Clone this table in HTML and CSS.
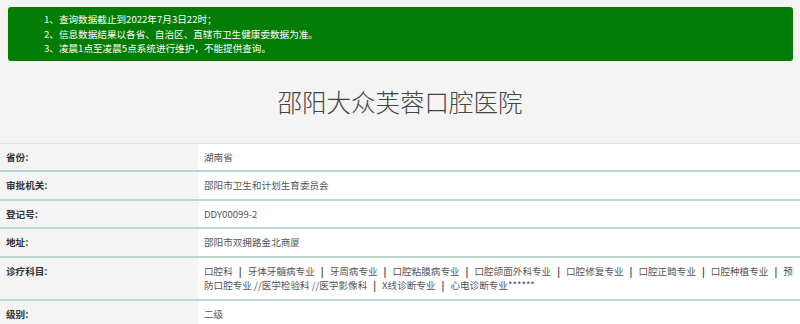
FILE: index.html
```html
<!DOCTYPE html>
<html lang="zh">
<head>
<meta charset="utf-8">
<title>邵阳大众芙蓉口腔医院</title>
<link rel="stylesheet" href="styles.css">
</head>
<body>
<div class="notice">
  <ul class="notice-list">
    <li>1、查询数据截止到2022年7月3日22时；</li>
    <li>2、信息数据结果以各省、自治区、直辖市卫生健康委数据为准。</li>
    <li>3、凌晨1点至凌晨5点系统进行维护，不能提供查询。</li>
  </ul>
</div>
<h1 class="title">邵阳大众芙蓉口腔医院</h1>
<div class="info">
  <div class="row"><div class="label">省份:</div><div class="value">湖南省</div></div>
  <div class="row"><div class="label">审批机关:</div><div class="value">邵阳市卫生和计划生育委员会</div></div>
  <div class="row"><div class="label">登记号:</div><div class="value">DDY00099-2</div></div>
  <div class="row"><div class="label">地址:</div><div class="value">邵阳市双拥路金北商厦</div></div>
  <div class="row"><div class="label">诊疗科目:</div><div class="value">口腔科<span class="sep">|</span>牙体牙髓病专业<span class="sep">|</span>牙周病专业<span class="sep">|</span>口腔粘膜病专业<span class="sep">|</span>口腔颌面外科专业<span class="sep">|</span>口腔修复专业<span class="sep">|</span>口腔正畸专业<span class="sep">|</span>口腔种植专业<span class="sep">|</span>预防口腔专业 //医学检验科 //医学影像科<span class="sep">|</span>X线诊断专业<span class="sep">|</span>心电诊断专业******</div></div>
  <div class="row"><div class="label">级别:</div><div class="value">二级</div></div>
</div>
</body>
</html>
```
FILE: styles.css
```css
html, body {
  margin: 0;
  padding: 0;
}
body {
  background: #f4f4f4;
  font-family: "Noto Sans CJK SC", "Noto Sans", sans-serif;
  font-size: 9.6px;
  color: #555;
}
.notice {
  margin: 7px 7px 0 8px;
  background: #027c02;
  border-radius: 3px;
  padding: 5px 0 5px 36px;
  color: #fff;
}
.notice-list {
  list-style: none;
  margin: 0;
  padding: 0;
  line-height: 14.6px;
}
.title {
  margin: 0;
  padding: 25px 0 25px;
  text-align: center;
  font-size: 24.5px;
  font-weight: 300;
  line-height: 32px;
  color: #444;
}
.info {
  border-top: 1px solid #e6e6e6;
}
.row {
  display: flex;
  border-bottom: 2px solid #bcd6d3;
}
.label {
  width: 198px;
  flex: none;
  box-sizing: border-box;
  padding: 6px 6px;
  line-height: 14.5px;
  font-weight: bold;
  color: #333;
  background: #f4f4f4;
}
.value {
  flex: 1;
  padding: 6px 0 6px 6px;
  line-height: 14.5px;
  background: #fff;
  color: #555;
}
.sep {
  margin: 0 6px;
  color: #333;
  font-weight: bold;
}
```
